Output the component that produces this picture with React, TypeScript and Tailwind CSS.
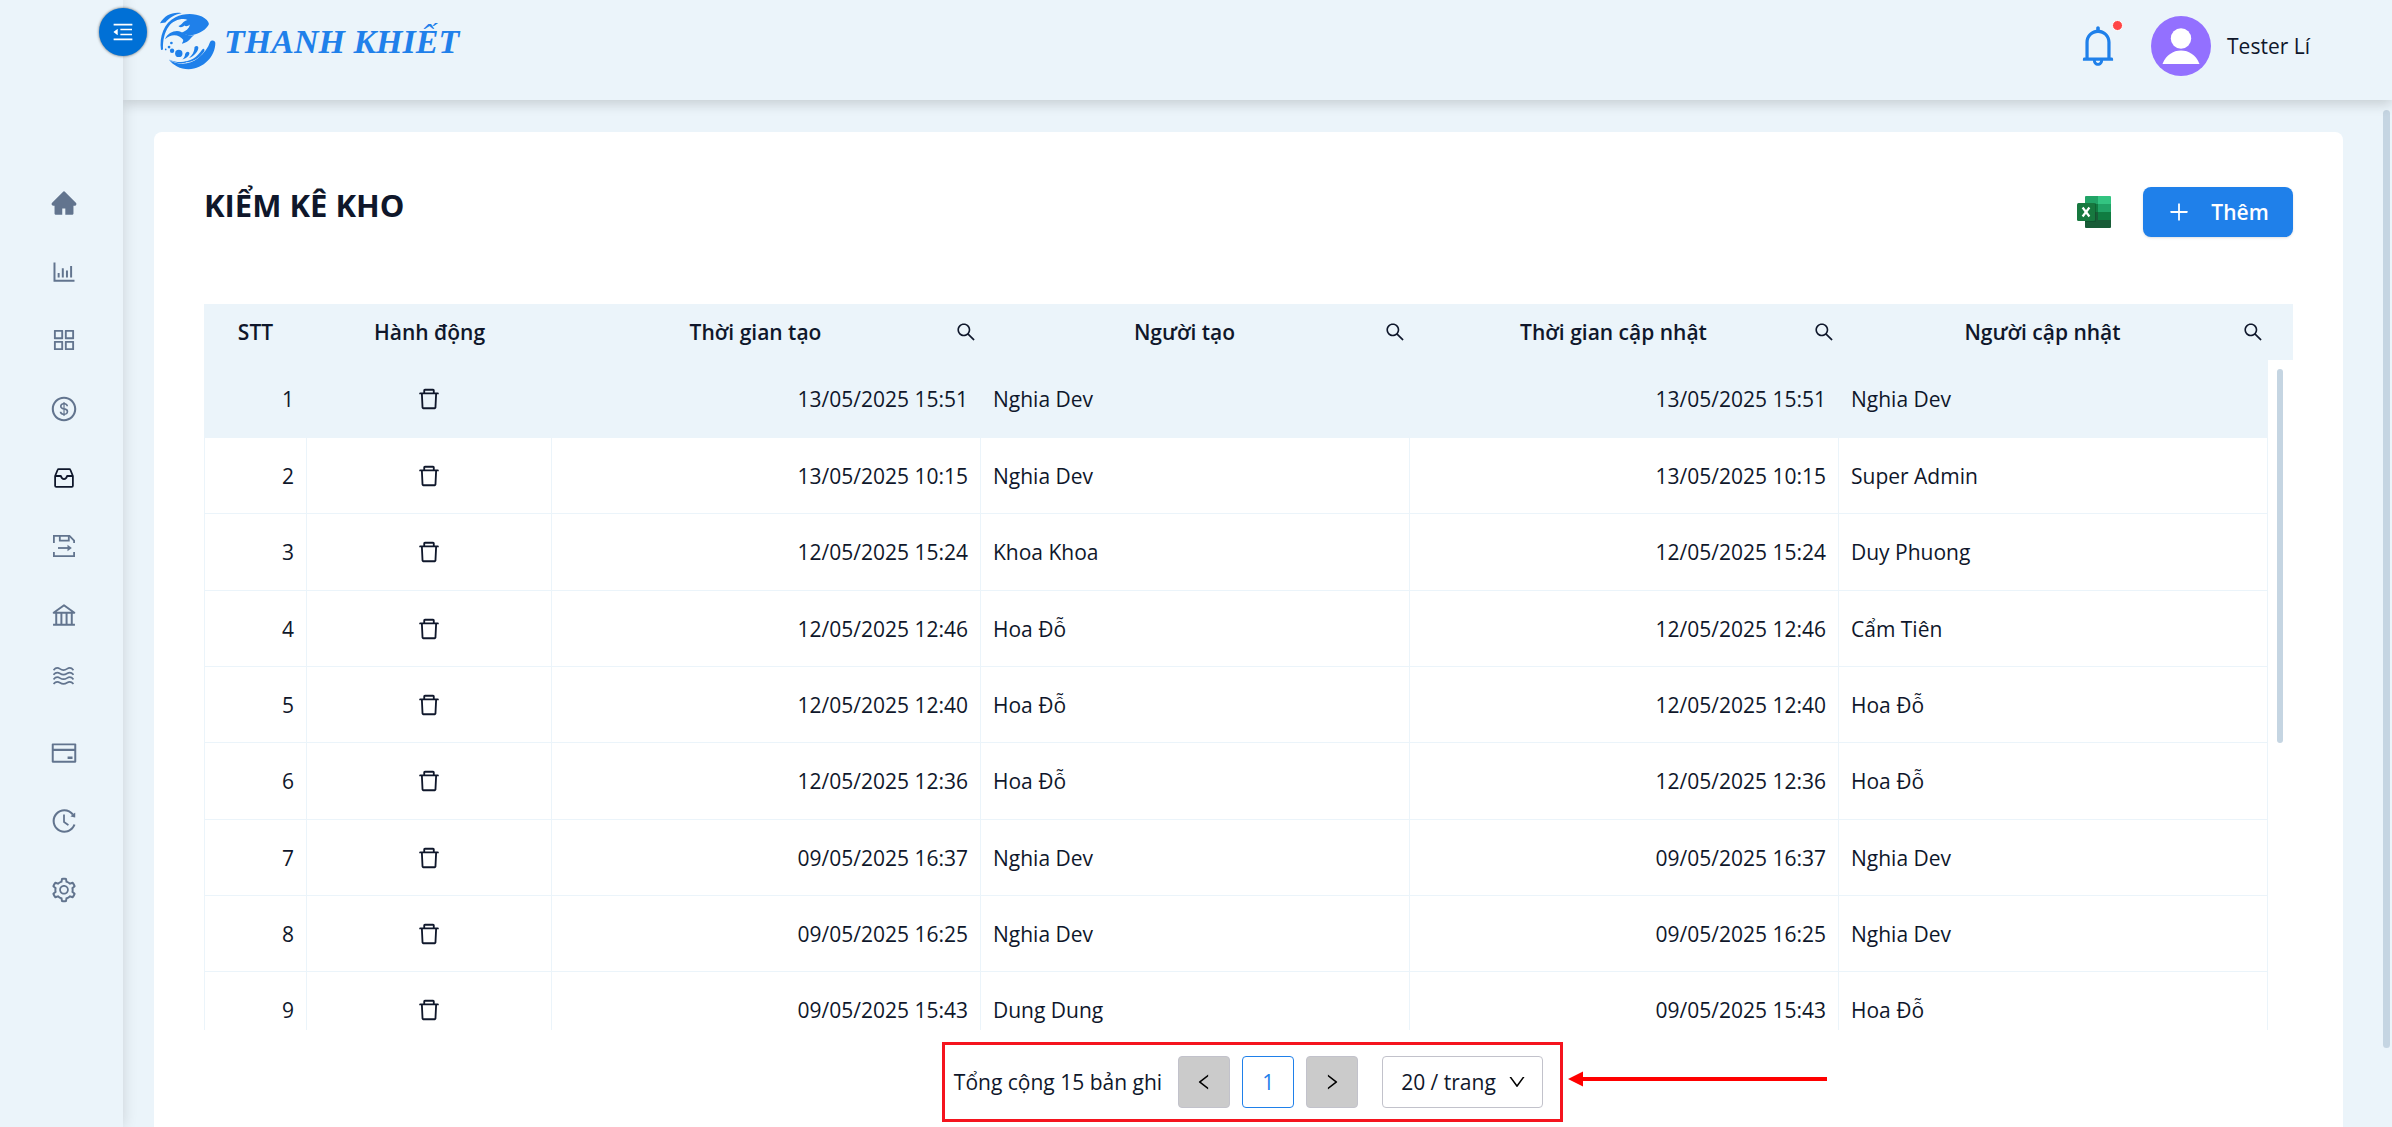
import React, { useState } from 'react';
import {
  AiFillHome,
  AiOutlineAppstore,
  AiOutlineBank,
  AiOutlineBarChart,
  AiOutlineBell,
  AiOutlineCreditCard,
  AiOutlineDelete,
  AiOutlineDollarCircle,
  AiOutlineDown,
  AiOutlineHistory,
  AiOutlineLeft,
  AiOutlineMenuFold,
  AiOutlinePlus,
  AiOutlineRight,
  AiOutlineSearch,
  AiOutlineSetting,
} from 'react-icons/ai';

interface StockCheck {
  createdAt: string;
  createdBy: string;
  updatedAt: string;
  updatedBy: string;
}

const rows: StockCheck[] = [
  { createdAt: '13/05/2025 15:51', createdBy: 'Nghia Dev', updatedAt: '13/05/2025 15:51', updatedBy: 'Nghia Dev' },
  { createdAt: '13/05/2025 10:15', createdBy: 'Nghia Dev', updatedAt: '13/05/2025 10:15', updatedBy: 'Super Admin' },
  { createdAt: '12/05/2025 15:24', createdBy: 'Khoa Khoa', updatedAt: '12/05/2025 15:24', updatedBy: 'Duy Phuong' },
  { createdAt: '12/05/2025 12:46', createdBy: 'Hoa Đỗ', updatedAt: '12/05/2025 12:46', updatedBy: 'Cẩm Tiên' },
  { createdAt: '12/05/2025 12:40', createdBy: 'Hoa Đỗ', updatedAt: '12/05/2025 12:40', updatedBy: 'Hoa Đỗ' },
  { createdAt: '12/05/2025 12:36', createdBy: 'Hoa Đỗ', updatedAt: '12/05/2025 12:36', updatedBy: 'Hoa Đỗ' },
  { createdAt: '09/05/2025 16:37', createdBy: 'Nghia Dev', updatedAt: '09/05/2025 16:37', updatedBy: 'Nghia Dev' },
  { createdAt: '09/05/2025 16:25', createdBy: 'Nghia Dev', updatedAt: '09/05/2025 16:25', updatedBy: 'Nghia Dev' },
  { createdAt: '09/05/2025 15:43', createdBy: 'Dung Dung', updatedAt: '09/05/2025 15:43', updatedBy: 'Hoa Đỗ' },
];

const searchColumns = ['Thời gian tạo', 'Người tạo', 'Thời gian cập nhật', 'Người cập nhật'];

const InboxIcon = () => (
  <svg viewBox="0 0 18 18" className="w-5 h-5" fill="none" stroke="currentColor" strokeWidth="1.6" strokeLinejoin="round">
    <path d="M1 7.2 3.3 1.6Q3.5 1 4.2 1h9.6q.7 0 .9.6L17 7.2V16q0 1-1 1H2q-1 0-1-1Z" />
    <path d="M1 7.2h5.2Q7 10 9 10t2.8-2.8H17" />
  </svg>
);

const SaveTransferIcon = () => (
  <svg viewBox="0 0 22 22" className="w-[22px] h-[22px]" fill="none" stroke="currentColor" strokeWidth="1.8">
    <path d="M.9 8V.9h15.600l4.600 4.600V8" />
    <path d="M6.800.9v4.800h9V.9" />
    <path d="M.9 17v4.100h20.200V17" />
    <path d="M5 13h10" />
    <path d="m14.5 9.8 4.3 3.2-4.3 3.2Z" fill="currentColor" stroke="none" />
  </svg>
);

const WavesIcon = () => (
  <svg viewBox="0 0 21 18" className="w-[21px] h-[18px] shrink-0" fill="none" stroke="currentColor" strokeWidth="1.700">
    <path d="M.5 3.200C2.500.6 5 .6 7 1.900s5 1.300 7 0 4.500-1.300 6.500 1.300" />
    <path d="M.5 7.800C2.500 5.200 5 5.200 7 6.500s5 1.300 7 0 4.500-1.300 6.500 1.300" />
    <path d="M.5 12.400C2.500 9.800 5 9.800 7 11.100s5 1.300 7 0 4.500-1.300 6.500 1.300" />
    <path d="M.5 17C2.500 14.400 5 14.400 7 15.700s5 1.300 7 0 4.500-1.300 6.500 1.300" />
  </svg>
);

const ExcelIcon = () => (
  <svg viewBox="0 0 34 32" className="w-[34px] h-8">
    <path d="M9 0h12v8H8V1q0-1 1-1Z" fill="#21a366" />
    <path d="M21 0h12q1 0 1 1v7H21Z" fill="#33c481" />
    <path d="M8 8h13v8H8Z" fill="#107c41" />
    <path d="M21 8h13v8H21Z" fill="#21a366" />
    <path d="M8 16h13v8H8Z" fill="#185c37" />
    <path d="M21 16h13v8H21Z" fill="#107c41" />
    <path d="M8 24h26v7q0 1-1 1H9q-1 0-1-1Z" fill="#185c37" />
    <path d="M8 7h10q1 0 1 1v17q0 1-1 1H8Z" fill="#0b4a28" opacity=".45" />
    <rect y="7" width="18" height="18" rx="1.500" fill="#17783f" />
    <path d="m5.600 11.500 6.800 9M12.400 11.500l-6.800 9" stroke="#fff" strokeWidth="2.200" />
  </svg>
);

const FishMark = () => (
  <svg viewBox="235 40 170 172" className="w-[57px] h-[58px]" fill="#1f80ea">
    <path d="M238 73C252 48 278 38 303 43 281 47 264 57 254 71Z" />
    <path d="M284 55C308 43 340 42 363 53 375 59 383 68 384 75 379 89 356 106 329 109 320 110 309 107 303 101 314 97 325 90 327 77 322 82 315 84 311 80 304 86 297 86 293 81 304 78 306 66 320 63 307 56 276 63 264 83 251 101 246 125 247 151L241 153C235 112 250 72 284 55Z" />
    <path d="M253 121C262 99 286 92 301 99 313 105 322 111 340 109 329 114 329 128 304 134 302 131 309 128 307 122 296 107 272 102 253 121Z" />
    <circle cx="294" cy="163" r="11" />
    <circle cx="274" cy="155" r="6.500" />
    <circle cx="265" cy="144" r="4" />
    <circle cx="272" cy="132" r="4" />
    <circle cx="255" cy="151" r="2.500" />
    <path d="M341 144c6-6 13-3 11 5-2 9-12 22-27 28 9-10 15-16 16-33Z" />
    <path d="M313 165c3-8 9-9 12-5 3 5-4 16-20 21 5-4 7-9 8-16Z" />
    <path d="M364 151c5-5 9 1 5 7-15 22-40 35-69 31 28-2 48-14 64-38Z" />
    <path d="M387 130c2-8 16-8 16 2 0 39-34 77-80 78-25 0-46-12-59-29 26 18 62 18 88-4 18-15 30-31 35-47Z" />
    <path d="M266 181c17 9 34 9 51 6l-3 4c-18 3-34 0-48-10Z" />
  </svg>
);

const menu = [
  { label: 'Trang chủ', icon: <AiFillHome className="w-7 h-7" /> },
  { label: 'Báo cáo', icon: <AiOutlineBarChart className="w-7 h-7" /> },
  { label: 'Danh mục', icon: <AiOutlineAppstore className="w-7 h-7" /> },
  { label: 'Bán hàng', icon: <AiOutlineDollarCircle className="w-7 h-7" /> },
  { label: 'Kho', icon: <InboxIcon />, active: true },
  { label: 'Chuyển kho', icon: <SaveTransferIcon /> },
  { label: 'Ngân hàng', icon: <AiOutlineBank className="w-7 h-7" /> },
  { label: 'Nguồn nước', icon: <WavesIcon />, raised: true },
  { label: 'Thanh toán', icon: <AiOutlineCreditCard className="w-7 h-7" /> },
  { label: 'Lịch sử', icon: <AiOutlineHistory className="w-7 h-7" /> },
  { label: 'Cài đặt', icon: <AiOutlineSetting className="w-7 h-7" /> },
];

const Sidebar: React.FC = () => (
  <aside className="relative z-20 w-[123px] shrink-0 bg-[#ebf4fa] shadow-[0_0_14px_rgba(0,0,0,0.14)]">
    <button
      aria-label="Thu gọn menu"
      className="absolute top-2 -right-6 w-12 h-12 rounded-full bg-[#0070d6] text-white flex items-center justify-center shadow-[0_0_3px_rgba(0,0,0,0.6)]"
    >
      <AiOutlineMenuFold className="w-6 h-6" />
    </button>
    <nav className="pt-[189px] pl-1">
      <ul className="flex flex-col items-center justify-between h-[715px]">
        {menu.map((item) => (
          <li key={item.label}>
            <a
              href="#"
              aria-label={item.label}
              className={`flex items-center justify-center w-7 h-7 ${item.active ? 'text-slate-900' : 'text-slate-500'} ${item.raised ? 'pb-4' : ''}`}
            >
              {item.icon}
            </a>
          </li>
        ))}
      </ul>
    </nav>
  </aside>
);

const Header: React.FC = () => (
  <header className="relative z-10 h-[100px] shrink-0 pl-9 pr-[82px] flex items-start justify-between bg-[#ebf4fa] shadow-[0_4px_12px_rgba(0,0,0,0.16)]">
    <a href="#" className="flex items-start gap-2 pt-3">
      <FishMark />
      <span className="font-['Liberation_Serif',serif] italic font-bold text-[34px] leading-[60px] text-[#1f80ea]">THANH KHIẾT</span>
    </a>
    <div className="flex items-center h-[92px]">
      <button aria-label="Thông báo" className="relative mr-[30px] text-[#1f80ea]">
        <AiOutlineBell className="w-[46px] h-[46px]" />
        <span className="absolute -top-[3px] -right-[2px] w-[11px] h-[11px] rounded-full bg-[#ff4545] border border-white" />
      </button>
      <svg viewBox="0 0 60 60" className="w-[60px] h-[60px] mr-4">
        <circle cx="30" cy="30" r="30" fill="#9370ff" />
        <circle cx="30" cy="22.500" r="10.200" fill="#fff" />
        <path d="M11.500 48C15 39 22 34.500 30 34.500S45 39 48.500 48Z" fill="#fff" />
      </svg>
      <span>Tester Lí</span>
    </div>
  </header>
);

const Columns = ({ gutter = false }: { gutter?: boolean }) => (
  <colgroup>
    <col className="w-[103px]" />
    <col className="w-[245px]" />
    <col />
    <col />
    <col />
    <col />
    {gutter && <col className="w-[25px]" />}
  </colgroup>
);

const StockTable: React.FC = () => (
  <div className="mt-[67px]">
    <table className="w-full table-fixed bg-[#ebf4fa]">
      <Columns gutter />
      <thead>
        <tr className="h-14">
          <th className="font-semibold">STT</th>
          <th className="font-semibold">Hành động</th>
          {searchColumns.map((name) => (
            <th key={name} className="font-semibold pl-2 pr-1">
              <div className="flex items-center gap-1">
                <span className="flex-1">{name}</span>
                <button aria-label={`Tìm ${name}`}>
                  <AiOutlineSearch className="w-[22px] h-[22px]" />
                </button>
              </div>
            </th>
          ))}
          <td />
        </tr>
      </thead>
    </table>

    <div className="flex h-[670px] overflow-hidden">
      <div className="flex-1">
        <table className="w-full table-fixed border-separate border-spacing-0">
          <Columns />
          <tbody>
            {rows.map((row, i) => (
              <tr
                key={i}
                className="h-[76px] first:h-[78px] nth-[3n]:h-[77px] first:bg-[#ebf4fa] [&>td]:border-r [&>td]:border-b [&>td]:border-[#ebf4fa] [&>td:first-child]:border-l [&>td]:px-3"
              >
                <td className="text-right">{i + 1}</td>
                <td>
                  <button aria-label="Xóa" className="block mx-auto">
                    <AiOutlineDelete className="w-[26px] h-[26px]" />
                  </button>
                </td>
                <td className="text-right">{row.createdAt}</td>
                <td>{row.createdBy}</td>
                <td className="text-right">{row.updatedAt}</td>
                <td>{row.updatedBy}</td>
              </tr>
            ))}
          </tbody>
        </table>
      </div>
      <div className="w-[25px] pt-[9px] pl-[9px]">
        <div className="w-[6px] h-[374px] rounded-full bg-[#c5d5e2]" />
      </div>
    </div>
  </div>
);

const Pagination: React.FC = () => {
  const [pageSize, setPageSize] = useState('20');

  return (
    <div className="mt-[26px] flex justify-center">
      <div className="relative flex items-center gap-3">
        <span className="pr-1">Tổng cộng 15 bản ghi</span>
        <button aria-label="Trang trước" className="w-[52px] h-[52px] flex items-center justify-center rounded bg-[#cbcbcb] border border-[#c2c2cb] text-black">
          <AiOutlineLeft className="w-5 h-5" />
        </button>
        <button className="w-[52px] h-[52px] rounded bg-white border border-[#1f80ea] text-[#1f80ea]">1</button>
        <button aria-label="Trang sau" className="w-[52px] h-[52px] flex items-center justify-center rounded bg-[#cbcbcb] border border-[#c2c2cb] text-black">
          <AiOutlineRight className="w-5 h-5" />
        </button>
        <div className="relative ml-3">
          <select
            aria-label="Số bản ghi mỗi trang"
            value={pageSize}
            onChange={(e) => setPageSize(e.target.value)}
            className="appearance-none w-[161px] h-[52px] pl-[18px] rounded bg-white border border-[#c2c2cb]"
          >
            <option value="10">10 / trang</option>
            <option value="20">20 / trang</option>
            <option value="50">50 / trang</option>
          </select>
          <AiOutlineDown className="absolute right-4 top-4 w-5 h-5 text-black pointer-events-none" />
        </div>

        {/* Callout around the pager */}
        <div className="absolute -left-3 -right-5 -top-[14px] -bottom-[14px] border-[3px] border-[#f5141e] pointer-events-none" />
        <svg viewBox="0 0 260 16" className="absolute left-full top-1/2 ml-[25px] -mt-[11px] w-[260px] h-4 pointer-events-none" fill="#ff0000">
          <path d="M0 8 15 .5v15Z" />
          <path d="M14 6h245v4H14Z" />
        </svg>
      </div>
    </div>
  );
};

const App: React.FC = () => {
  return (
    <div className="flex h-screen overflow-hidden bg-[#ebf4fa] font-['Open_Sans','Noto_Sans',sans-serif] text-[21px] leading-8 text-slate-900">
      <Sidebar />
      <div className="flex-1 min-w-0 flex flex-col">
        <Header />
        <div className="flex-1 min-h-0 flex">
          <main className="flex-1 min-w-0 overflow-hidden pl-[31px] pr-10 pt-8">
            <section className="min-h-full bg-white rounded-t-lg px-[50px] pt-[55px]">
              <div className="flex items-start justify-between">
                <h1 className="text-[31px] leading-9 font-bold">KIỂM KÊ KHO</h1>
                <div className="flex items-center gap-8">
                  <button aria-label="Xuất Excel">
                    <ExcelIcon />
                  </button>
                  <button className="w-[150px] h-[50px] flex items-center justify-center gap-5 rounded-lg bg-[#1f80ea] text-white font-semibold shadow-sm">
                    <AiOutlinePlus className="w-6 h-6" />
                    Thêm
                  </button>
                </div>
              </div>
              <StockTable />
              <Pagination />
            </section>
          </main>
          <div className="w-[9px] pt-[10px]">
            <div className="w-[7px] h-[938px] rounded-full bg-[#c5d5e2]" />
          </div>
        </div>
      </div>
    </div>
  );
};

export default App;
